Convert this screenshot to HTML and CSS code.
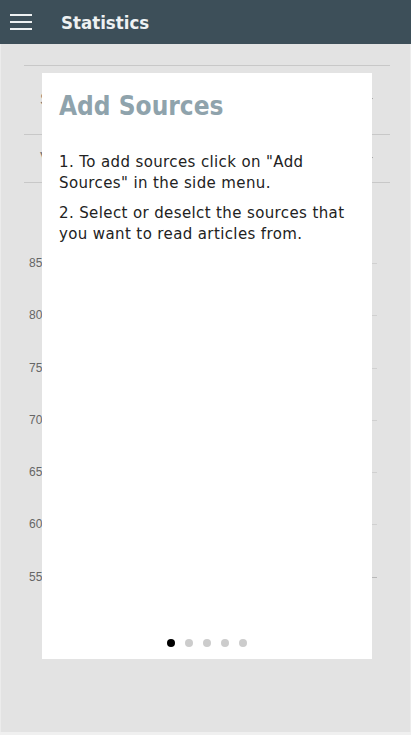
FILE: index.html
```html
<!DOCTYPE html>
<html>
<head>
<meta charset="utf-8">
<link rel="stylesheet" href="styles.css">
</head>
<body>
<div class="app">
  <header class="topbar">
    <svg class="menu" width="22" height="16" viewBox="0 0 22 16"><rect x="0" y="0" width="22" height="2"/><rect x="0" y="7" width="22" height="2"/><rect x="0" y="14" width="22" height="2"/></svg>
    <h1 class="title">Statistics</h1>
  </header>
  <main class="content">
    <div class="field"><span class="flabel">S</span><span class="chev"></span></div>
    <div class="field short"><span class="flabel">V</span><span class="chev"></span></div>
    <div class="chart">
      <div class="row"><span class="ylabel">85</span><span class="tick"></span></div>
      <div class="row"><span class="ylabel">80</span><span class="tick"></span></div>
      <div class="row"><span class="ylabel">75</span><span class="tick"></span></div>
      <div class="row"><span class="ylabel">70</span><span class="tick"></span></div>
      <div class="row"><span class="ylabel">65</span><span class="tick"></span></div>
      <div class="row"><span class="ylabel">60</span><span class="tick"></span></div>
      <div class="row"><span class="ylabel">55</span><span class="tick dark"></span></div>
    </div>
  </main>
  <div class="modal">
    <h2 class="mtitle">Add Sources</h2>
    <p class="mtext">1. To add sources click on "Add Sources" in the side menu.</p>
    <p class="mtext">2. Select or deselct the sources that you want to read articles from.</p>
    <div class="dots"><span class="dot on"></span><span class="dot"></span><span class="dot"></span><span class="dot"></span><span class="dot"></span></div>
  </div>
</div>
</body>
</html>
```
FILE: styles.css
```css
html, body { margin: 0; padding: 0; }
body { background: #f0f0f0; width: 411px; height: 735px; overflow: hidden; font-family: "DejaVu Sans", sans-serif; }
.app { position: relative; height: 732px; background: #e3e3e3; display: flex; flex-direction: column; }
.topbar { height: 44px; flex: none; background: #3d4f59; display: flex; align-items: center; }
.menu { fill: #eef1f2; margin-left: 10px; }
.title { margin: 0 0 0 29px; font-family: "DejaVu Sans Condensed", "DejaVu Sans", sans-serif; font-stretch: condensed; font-size: 18.5px; font-weight: bold; color: #eef1f2; }
.content { flex: 1; padding: 21px 20px 0 23px; border-left: 1px solid #ececec; border-right: 1px solid #ececec; }
.field { height: 68px; border-top: 1px solid #c8c8c8; display: flex; align-items: center; justify-content: space-between; padding: 0 17px 0 16px; }
.field.short { height: 47px; border-bottom: 1px solid #c8c8c8; }
.flabel { font-family: "Liberation Sans", sans-serif; font-size: 17px; color: #777; }
.chev { width: 0; height: 0; border-left: 3px solid transparent; border-right: 3px solid transparent; border-top: 4px solid #888; }
.chart { padding-top: 80px; }
.row { height: 52.3px; display: flex; justify-content: space-between; align-items: flex-start; }
.ylabel { font-family: "Liberation Sans", sans-serif; font-size: 12px; color: #666; margin-left: 5px; line-height: 12px; margin-top: -6px; }
.tick { width: 5px; height: 1px; background: #d0d0d0; margin-right: 13px; }
.tick.dark { background: #b8b8b8; }
.modal { position: absolute; left: 42px; top: 73px; width: 330px; height: 586px; background: #fff; box-sizing: border-box; padding: 16px 17px 0 17px; }
.mtitle { margin: 0 0 29px; font-family: "DejaVu Sans Condensed", "DejaVu Sans", sans-serif; font-stretch: condensed; font-size: 26px; font-weight: bold; color: #8fa3ac; line-height: 34px; }
.mtext { margin: 0 0 9px; font-size: 15px; line-height: 21px; color: #222; letter-spacing: 0.38px; }
.dots { position: absolute; left: 0; right: 0; bottom: 12px; display: flex; justify-content: center; gap: 10px; }
.dot { width: 8px; height: 8px; border-radius: 50%; background: #cccccc; }
.dot.on { background: #000; }
```
